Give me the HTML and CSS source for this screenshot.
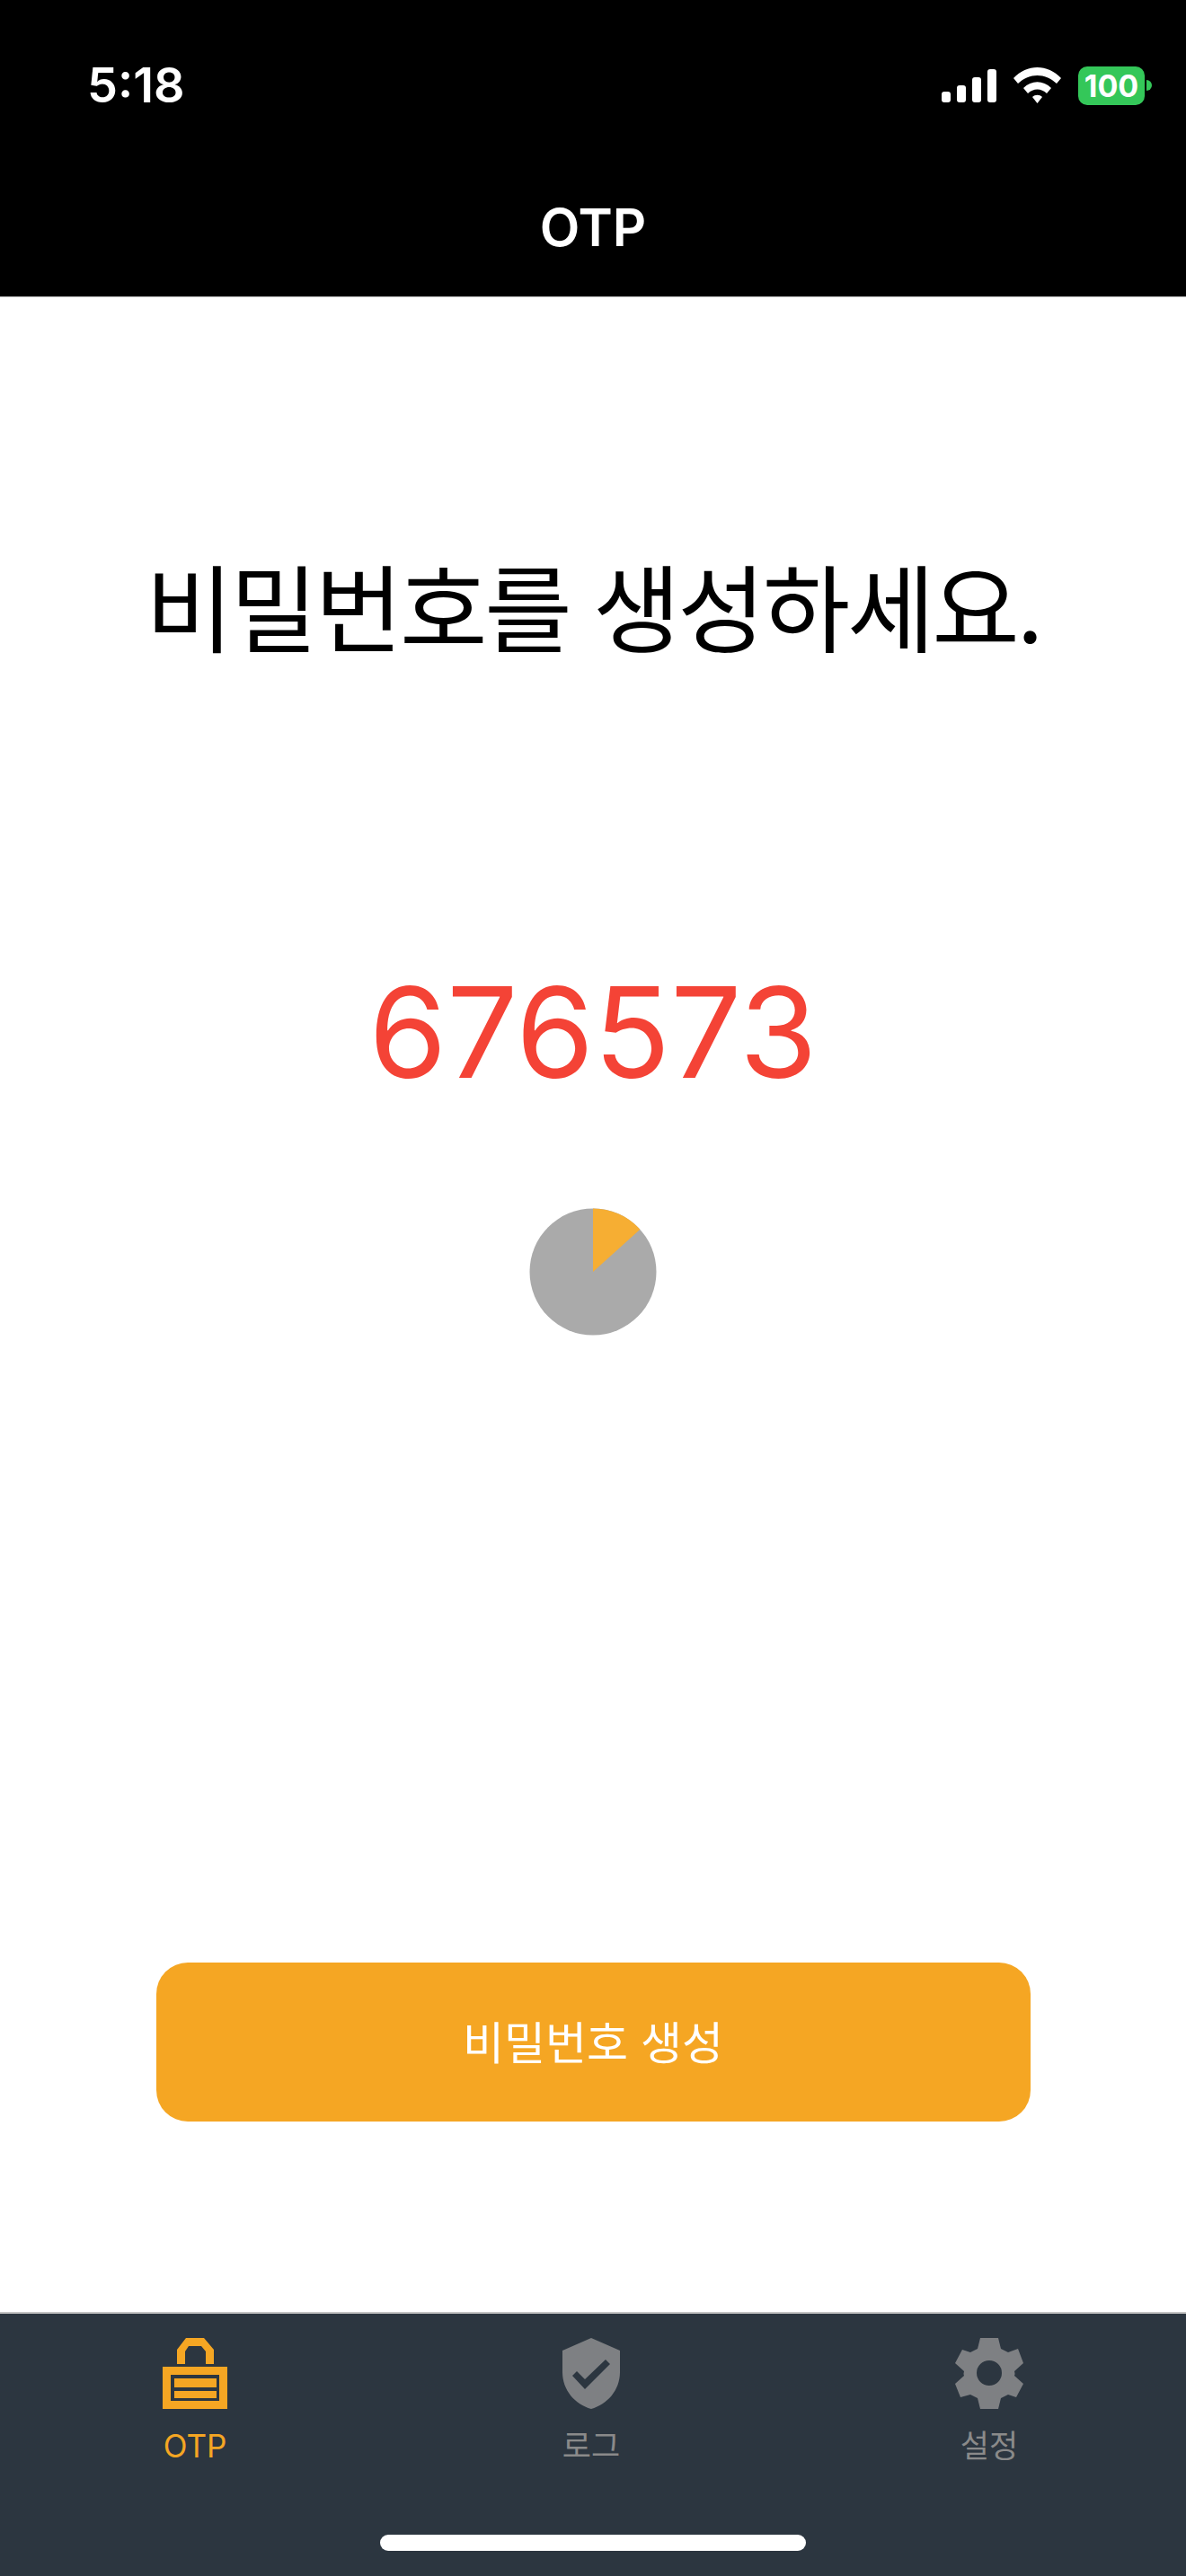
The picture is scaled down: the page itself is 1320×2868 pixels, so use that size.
FILE: index.html
```html
<!DOCTYPE html>
<html lang="ko">
<head>
  <meta charset="UTF-8" />
  <meta name="viewport" content="width=device-width, initial-scale=1.0" />
  <title>OTP</title>
  <link rel="stylesheet" href="styles.css">
</head>
<body>
  <header class="top">
    <div class="status">
      <span class="clock">5:18</span>
      <div class="status-icons">
        <svg class="signal" width="61" height="37" viewBox="0 0 61 37">
          <rect x="0" y="25" width="10" height="12" rx="3" />
          <rect x="17" y="18" width="10" height="19" rx="3" />
          <rect x="34" y="9" width="10" height="28" rx="3" />
          <rect x="51" y="0" width="10" height="37" rx="3" />
        </svg>
        <svg class="wifi" width="53" height="40" viewBox="0 0 53 40">
          <path d="M0 12 C15 -4 38 -4 53 12 L48 18 C35 6 18 6 5 18 Z" />
          <path d="M11 23 C20 14 33 14 42 23 L37 29 C31 23 22 23 16 29 Z" />
          <path d="M21 33 C24 30 29 30 32 33 L26.5 40 Z" />
        </svg>
        <div class="battery">
          <span class="battery-level">100</span>
          <span class="battery-cap"></span>
        </div>
      </div>
    </div>
    <h1 class="nav-title">OTP</h1>
  </header>

  <main class="content">
    <h2 class="prompt">비밀번호를 생성하세요.</h2>
    <div class="code">676573</div>
    <svg class="timer" width="142" height="142" viewBox="0 0 142 142">
      <circle cx="71" cy="71" r="70.5" fill="#aaaaaa" />
      <path d="M71 71 L71 0.5 A70.5 70.5 0 0 1 123.4 23.8 Z" fill="#f6ae33" />
    </svg>
    <button class="generate" type="button">비밀번호 생성</button>
  </main>

  <nav class="tabs">
    <div class="tab-row">
      <a class="tab tab-active">
        <svg width="72" height="79" viewBox="0 0 72 79">
          <path d="M16 29 V13 L26 0 H46 L57 13 V29 H48 V15 L43 9 H29 L25 15 V29 Z" />
          <path fill-rule="evenodd" d="M0 32 H72 V79 H0 Z M9 41 V70 H63 V41 Z" />
          <path d="M13 45 H60 V55 H13 Z M13 59 H60 V67 H13 Z" />
        </svg>
        <span>OTP</span>
      </a>
      <a class="tab">
        <svg width="64" height="79" viewBox="0 0 64 79">
          <path fill-rule="evenodd" d="M32 0 L64 14 V38 C64 58 50 74 32 79 C14 74 0 58 0 38 V14 Z M11 42 L16 37 L25 46 L48 24 L53 29 L25 57 Z" />
        </svg>
        <span>로그</span>
      </a>
      <a class="tab">
        <svg width="78" height="79" viewBox="0 0 78 79">
          <path fill-rule="evenodd" d="M29 0 H49 L52 12 Q56 14 60 16 L71 12 L77 28 L67 37 Q68 40 67 42 L77 51 L69 66 L60 63 Q56 65 52 67 L49 79 H29 L26 67 Q22 65 18 63 L7 66 L1 51 L11 42 Q10 40 11 37 L1 28 L9 13 L18 16 Q22 14 26 12 Z M39 25 A14 14 0 1 0 39 53 A14 14 0 1 0 39 25 Z" />
        </svg>
        <span>설정</span>
      </a>
    </div>
    <div class="home-indicator"></div>
  </nav>
</body>
</html>
```

FILE: styles.css
```css
* {
  box-sizing: border-box;
}

html, body {
  height: 100%;
}

body {
  margin: 0;
  width: 1320px;
  height: 2868px;
  display: flex;
  flex-direction: column;
  background: white;
  font-family: "Liberation Sans", "Noto Sans CJK KR", sans-serif;
}

.top {
  height: 331px;
  background: black;
  color: white;
  border-bottom: 1px solid #c4c4c4;
}

.status {
  height: 218px;
  padding: 66px 38px 0 97px;
  display: flex;
  justify-content: space-between;
  align-items: flex-start;
}

.clock {
  font-family: Inter, sans-serif;
  font-size: 54px;
  font-weight: 600;
  line-height: 58px;
}

.status-icons {
  height: 58px;
  display: flex;
  align-items: center;
  gap: 19px;
}

.signal, .wifi {
  fill: white;
}

.battery {
  display: flex;
  align-items: center;
  gap: 2px;
}

.battery-level {
  width: 74px;
  height: 43px;
  border-radius: 10px;
  background: #34c759;
  color: white;
  font-family: Inter, sans-serif;
  font-size: 34px;
  font-weight: 700;
  line-height: 43px;
  text-align: center;
}

.battery-cap {
  width: 6px;
  height: 12px;
  border-radius: 0 6px 6px 0;
  background: #34c759;
}

.nav-title {
  margin: 0;
  font-family: Inter, sans-serif;
  font-size: 58px;
  font-weight: 600;
  line-height: 70px;
  text-align: center;
}

.content {
  flex: 1;
  display: flex;
  flex-direction: column;
  align-items: center;
}

.prompt {
  margin: 276px 0 0;
  font-family: "Noto Sans CJK KR", sans-serif;
  font-size: 106px;
  font-weight: 400;
  letter-spacing: -3.2px;
  line-height: 130px;
  color: black;
}

.code {
  margin-top: 327px;
  font-family: Inter, sans-serif;
  font-size: 140px;
  line-height: 170px;
  color: #f44336;
}

.timer {
  margin-top: 111px;
}

.generate {
  margin-top: auto;
  margin-bottom: 212px;
  width: 973px;
  height: 177px;
  padding-bottom: 6px;
  border: none;
  border-radius: 35px;
  background-color: #f5a623;
  color: white;
  font-family: "Noto Sans CJK KR", sans-serif;
  font-size: 50px;
}

.tabs {
  height: 294px;
  background: #2c3640;
  border-top: 2px solid #c4c4c4;
}

.tab-row {
  display: grid;
  grid-template-columns: 434px 448px 438px;
}

.tab {
  display: flex;
  flex-direction: column;
  align-items: center;
  padding-top: 27px;
  gap: 21px;
  color: #8a8a8a;
  fill: #7e8083;
  font-family: Inter, "Noto Sans CJK KR", sans-serif;
  font-size: 35px;
  line-height: 40px;
}

.tab-active {
  color: #f5a623;
  fill: #f5a623;
}

.home-indicator {
  width: 474px;
  height: 18px;
  margin-top: 79px;
  margin-left: auto;
  margin-right: auto;
  border-radius: 9px;
  background: white;
}
```
